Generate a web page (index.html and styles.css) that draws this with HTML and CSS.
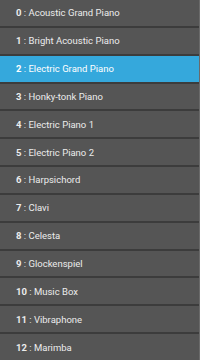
FILE: index.html
```html
<!DOCTYPE html>
<html lang="en">
<head>
  <meta charset="UTF-8" />
  <meta name="viewport" content="width=device-width, initial-scale=1.0" />
  <title>Instruments</title>
  <link rel="stylesheet" href="styles.css">
</head>
<body>
  <ul class="program-list">
    <li><b>0</b> : Acoustic Grand Piano</li>
    <li><b>1</b> : Bright Acoustic Piano</li>
    <li class="selected"><b>2</b> : Electric Grand Piano</li>
    <li><b>3</b> : Honky-tonk Piano</li>
    <li><b>4</b> : Electric Piano 1</li>
    <li><b>5</b> : Electric Piano 2</li>
    <li><b>6</b> : Harpsichord</li>
    <li><b>7</b> : Clavi</li>
    <li><b>8</b> : Celesta</li>
    <li><b>9</b> : Glockenspiel</li>
    <li><b>10</b> : Music Box</li>
    <li><b>11</b> : Vibraphone</li>
    <li><b>12</b> : Marimba</li>
  </ul>
</body>
</html>
```

FILE: styles.css
```css
* {
  box-sizing: border-box;
  margin: 0;
  padding: 0;
}

body {
  background: #555555;
  font-family: Roboto, "Noto Sans", sans-serif;
  overflow: hidden;
}

.program-list {
  list-style: none;
  display: flex;
  flex-direction: column;
  height: 360px;
  border-right: 1px solid #6a6a6a;
}

.program-list li {
  flex: 1;
  display: flex;
  align-items: center;
  white-space: pre;
  padding-left: 16px;
  font-size: 9.5px;
  color: #ececec;
  border-bottom: 2px solid #3c3c3c;
}

.program-list li:last-child {
  border-bottom: none;
}

.program-list li b {
  font-weight: bold;
}

.program-list li.selected {
  background: #35a8dc;
  color: #ffffff;
}
```
